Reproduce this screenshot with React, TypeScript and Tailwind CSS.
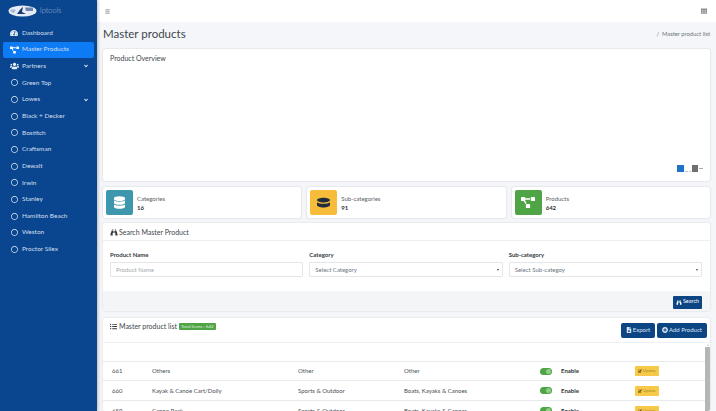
import { FaTachometerAlt, FaProjectDiagram, FaUsers, FaRegCircle, FaAngleDown, FaBars, FaTh, FaDatabase, FaHockeyPuck, FaBinoculars, FaListUl, FaFileDownload, FaPlusCircle, FaEdit } from 'react-icons/fa';

const font = { fontFamily: 'Lato, sans-serif' };

const navItems = ['Green Top', 'Lowes', 'Black + Decker', 'Bostitch', 'Craftsman', 'Dewalt', 'Irwin', 'Stanley', 'Hamilton Beach', 'Weston', 'Proctor Silex'];

const stats = [
  { label: 'Categories', value: '16', color: 'bg-[#3f97ad]', icon: <FaDatabase className="w-[11px] h-[13px] text-white" /> },
  { label: 'Sub-categories', value: '91', color: 'bg-[#f7bd3a]', icon: <FaHockeyPuck className="w-[13px] h-[13px] text-[#1f2d3d]" /> },
  { label: 'Products', value: '642', color: 'bg-[#4fa446]', icon: <FaProjectDiagram className="w-[14px] h-[13px] text-white" /> },
];

const rows = [
  { id: '661', name: 'Others', cat: 'Other', sub: 'Other', h: 'h-[19px]' },
  { id: '660', name: 'Kayak & Canoe Cart/Dolly', cat: 'Sports & Outdoor', sub: 'Boats, Kayaks & Canoes', h: 'h-[20px]' },
  { id: '659', name: 'Canoe Rack', cat: 'Sports & Outdoor', sub: 'Boats, Kayaks & Canoes', h: 'h-[20px]' },
];

function NavRow({ icon, label, active, caret }: { icon: React.ReactNode; label: string; active?: boolean; caret?: boolean }) {
  return (
    <div className={`h-[16px] mb-[0.65px] mx-[3px] rounded-[2px] flex items-center pl-[7px] pr-[5px] ${active ? 'bg-[#0d7bf5]' : ''}`}>
      <span className="w-[12px] flex justify-start shrink-0">{icon}</span>
      <span className="flex-1 text-[6.5px] leading-none text-[#d3dfee]">{label}</span>
      {caret && <FaAngleDown className="w-[6px] h-[6px] text-[#dfe9f5]" />}
    </div>
  );
}

export default function App() {
  return (
    <div className="flex h-[411px] w-[716px] overflow-hidden bg-[#f4f6f9] text-[#4a4f55]" style={font}>
      <aside className="w-[97px] shrink-0 bg-[#0a468f] shadow-[1px_0_3px_rgba(0,0,0,0.25)] z-10">
        <div className="h-[22px] flex items-center pl-[8px] gap-[3px]">
          <svg width="29" height="12" viewBox="0 0 29 12">
            <ellipse cx="14.5" cy="6" rx="14" ry="5.6" fill="#e6ecf5" />
            <path d="M9 9 C11 6 12 4 15 2 L14 7 L18 9 Z" fill="#1c3a78" />
            <path d="M17 2.5 H25 V6 H18 Z" fill="#6f83ad" />
            <path d="M2 5 C4 4 6 4 8 5 L6 8 C4 8 3 7 2 5 Z" fill="#a9bbd8" />
          </svg>
          <span className="text-[7.5px] leading-none font-light text-[#a9bcd4]">lptools</span>
        </div>
        <nav className="pt-[3px]">
          <NavRow icon={<FaTachometerAlt className="w-[8px] h-[8px] text-[#e8eef6]" />} label="Dashboard" />
          <NavRow icon={<FaProjectDiagram className="w-[9px] h-[8px] text-white" />} label="Master Products" active />
          <NavRow icon={<FaUsers className="w-[9px] h-[8px] text-[#e8eef6]" />} label="Partners" caret />
          {navItems.map((item) => (
            <NavRow key={item} icon={<FaRegCircle className="w-[7px] h-[7px] ml-[1px] text-[#e8eef6]" />} label={item} caret={item === 'Lowes'} />
          ))}
        </nav>
      </aside>

      <main className="flex-1 min-w-0 flex flex-col">
        <header className="h-[22px] shrink-0 bg-white flex items-center justify-between pl-[8px] pr-[9px]">
          <FaBars className="w-[5px] h-[5px] text-[#777]" />
          <FaTh className="w-[6px] h-[6px] text-[#777]" />
        </header>

        <div className="pl-[6px] pr-[6px] flex-1 min-h-0 flex flex-col">
          <div className="h-[27px] shrink-0 flex items-center justify-between pb-[3px]">
            <h1 className="text-[11.5px] leading-none text-[#40464c] font-normal">Master products</h1>
            <span className="text-[5.8px] leading-none text-[#6c757d]">/&nbsp; Master product list</span>
          </div>

          <section className="h-[132px] shrink-0 bg-white rounded-[2px] shadow-[0_0_2px_rgba(0,0,0,0.2)] relative pl-[7px] pt-[5px]">
            <h2 className="text-[7px] leading-[8px] text-[#40464c] font-normal">Product Overview</h2>
            <div className="absolute right-[7px] bottom-[9px] flex items-center gap-[1px]">
              <span className="flex items-end gap-[1px]">
                <span className="w-[7px] h-[7px] bg-[#1f72c9]" />
                <span className="w-[3px] h-[1px] bg-[#a9c6e4]" />
                <span className="w-[2px] h-[1px] bg-[#c9c9c9]" />
              </span>
              <span className="flex items-center gap-[1px]">
                <span className="w-[6px] h-[7px] bg-[#6f6f6f]" />
                <span className="w-[4px] h-[1px] bg-[#aaa]" />
              </span>
            </div>
          </section>

          <div className="grid grid-cols-3 gap-[6px] mt-[6px] shrink-0">
            {stats.map((s) => (
              <div key={s.label} className="h-[31px] bg-white rounded-[2px] shadow-[0_0_2px_rgba(0,0,0,0.2)] flex items-center pl-[3px]">
                <div className={`w-[27px] h-[25px] rounded-[2px] flex items-center justify-center ${s.color}`}>{s.icon}</div>
                <div className="ml-[4px]">
                  <div className="text-[6px] leading-[9px] text-[#5a6066]">{s.label}</div>
                  <div className="text-[6px] leading-[9px] font-bold text-[#30353a]">{s.value}</div>
                </div>
              </div>
            ))}
          </div>

          <section className="mt-[5px] h-[88px] shrink-0 bg-white rounded-[2px] shadow-[0_0_2px_rgba(0,0,0,0.15)] flex flex-col">
            <div className="h-[18px] shrink-0 border-b border-[#eceef0] flex items-center gap-[1px] pl-[7px] pt-[1px]">
              <FaBinoculars className="w-[8px] h-[7px] text-[#343a40]" />
              <span className="text-[7px] leading-none text-[#40464c]">Search Master Product</span>
            </div>
            <div className="h-[50px] shrink-0 grid grid-cols-3 gap-[6px] pl-[7px] pr-[8px] pt-[10px]">
              {[
                { label: 'Product Name', ph: 'Product Name', select: false },
                { label: 'Category', ph: 'Select Category', select: true },
                { label: 'Sub-category', ph: 'Select Sub-categoy', select: true },
              ].map((f) => (
                <div key={f.label}>
                  <div className="text-[6px] leading-[8px] font-bold text-[#343a40] mb-[3px]">{f.label}</div>
                  <div className="h-[15px] border border-[#e3e6ea] rounded-[1px] flex items-center justify-between pl-[5px] pr-[3px]">
                    <span className={`text-[6px] leading-none ${f.select ? 'text-[#6c757d]' : 'text-[#a3a8ae]'}`}>{f.ph}</span>
                    {f.select && <span className="border-x-[1.5px] border-t-[2px] border-x-transparent border-t-[#444]" />}
                  </div>
                </div>
              ))}
            </div>
            <div className="flex-1 bg-[#f4f5f7] flex items-center justify-end pr-[8px]">
              <button className="h-[13px] w-[29px] mt-[2px] rounded-[1px] bg-[#0c4584] flex items-center justify-center gap-[1px] text-white">
                <FaBinoculars className="w-[6px] h-[5px]" />
                <span className="text-[5.5px] leading-none">Search</span>
              </button>
            </div>
          </section>

          <section className="mt-[7px] flex-1 min-h-0 bg-white rounded-[2px] shadow-[0_0_2px_rgba(0,0,0,0.15)] flex flex-col overflow-hidden">
            <div className="h-[24px] shrink-0 flex justify-between pl-[7px] pr-[3px]">
              <div className="flex items-center gap-[1px] pb-[8px]">
                <FaListUl className="w-[7px] h-[7px] text-[#343a40]" />
                <span className="text-[7px] leading-none text-[#40464c] ml-[1px]">Master product list</span>
                <span className="ml-[1px] h-[7px] px-[2px] bg-[#4fa446] rounded-[1px] text-[4.5px] leading-[7px] text-[#dff0dc]">Total Items : 642</span>
              </div>
              <div className="flex items-center gap-[2px]">
                <button className="h-[15px] w-[34px] rounded-[2px] bg-[#0c4584] flex items-center justify-center gap-[1px] text-[#dbe6f2]">
                  <FaFileDownload className="w-[6px] h-[6px]" />
                  <span className="text-[6px] leading-none">Export</span>
                </button>
                <button className="h-[15px] w-[50px] rounded-[2px] bg-[#0c4584] flex items-center justify-center gap-[1px] text-[#dbe6f2]">
                  <FaPlusCircle className="w-[6px] h-[6px]" />
                  <span className="text-[6px] leading-none">Add Product</span>
                </button>
              </div>
            </div>
            <div className="flex-1 min-h-0 flex border-t border-[#f0f1f3]">
              <div className="flex-1 min-w-0">
                <div className="h-[19px] border-b border-[#e8eaed]" />
                {rows.map((r) => (
                  <div key={r.id} className={`grid grid-cols-[40px_146px_106px_136px_21px_74px_24px] items-center ${r.h} border-b border-[#e8eaed] text-[6px] leading-none text-[#4a4f55] pl-[9px]`}>
                    <span>{r.id}</span>
                    <span>{r.name}</span>
                    <span>{r.cat}</span>
                    <span>{r.sub}</span>
                    <span className="w-[12px] h-[7px] rounded-full bg-[#4fa446] flex justify-end items-center pr-[1px]">
                      <span className="w-[5px] h-[5px] rounded-full bg-[#8ccf85]" />
                    </span>
                    <span className="font-bold text-[#30353a]">Enable</span>
                    <span className="h-[10px] bg-[#f7c948] rounded-[1px] flex items-center justify-center gap-[1px] text-[4px] text-[#a8842a]">
                      <FaEdit className="w-[4px] h-[4px] text-[#5c4a14]" />
                      Update
                    </span>
                  </div>
                ))}
              </div>
              <div className="w-[5px] shrink-0 flex flex-col items-center">
                <span className="border-x-[1.5px] border-b-[2px] border-x-transparent border-b-[#c9c9c9] mt-[1px]" />
                <div className="flex-1 w-[5px] mt-[1px] bg-[#b5b5b5]" />
              </div>
            </div>
          </section>
        </div>
      </main>
    </div>
  );
}
